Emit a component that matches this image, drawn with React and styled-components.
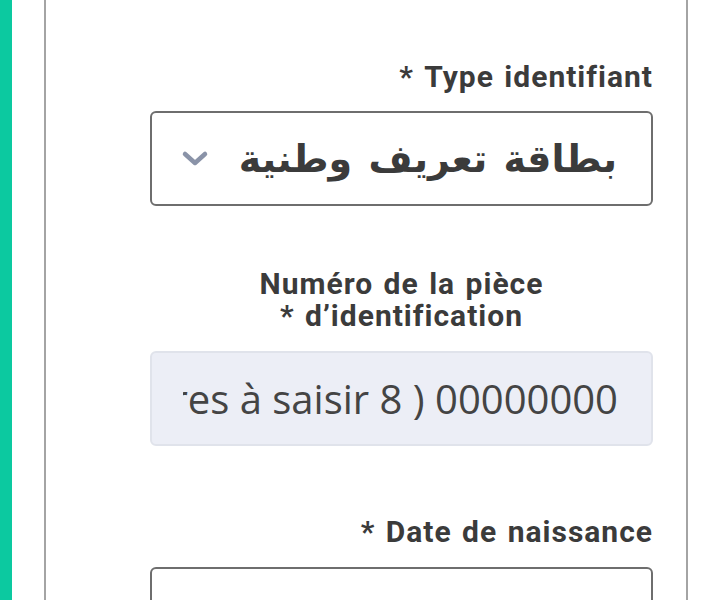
import React from "react";
import styled, { createGlobalStyle } from "styled-components";

const GlobalStyle = createGlobalStyle`
  html, body { margin: 0; padding: 0; background: #ffffff; }
  body { width: 720px; height: 600px; overflow: hidden; }
`;

const Page = styled.div`
  display: flex;
  height: 600px;
  overflow: hidden;
  background: #ffffff;
`;

const Accent = styled.div`
  width: 12px;
  flex: none;
  background: #0cc9a0;
`;

const Card = styled.div`
  margin-left: 32px;
  width: 640px;
  flex: none;
  border-left: 2px solid #a4a4a4;
  border-right: 2px solid #a4a4a4;
  background: #ffffff;
`;

const Form = styled.form`
  direction: rtl;
  display: flex;
  flex-direction: column;
  padding: 61px 33px 0 104px;
`;

const Field = styled.div`
  display: flex;
  flex-direction: column;
  margin-bottom: ${(p) => p.$gap || 0}px;
`;

const Label = styled.label`
  font-family: Roboto, "Liberation Sans", sans-serif;
  font-weight: 700;
  font-size: 30px;
  line-height: 32px;
  letter-spacing: 1px;
  word-spacing: 2px;
  color: #3b3b3b;
  text-align: ${(p) => (p.$center ? "center" : "right")};
  margin-bottom: ${(p) => p.$mb || 18}px;
`;

const SelectBox = styled.div`
  height: 95px;
  box-sizing: border-box;
  border: 2px solid #6e6e6e;
  border-radius: 6px;
  display: flex;
  align-items: center;
  justify-content: space-between;
  padding: 0 34px 0 28px;
  background: #fff;
`;

const SelectText = styled.span`
  font-family: "DejaVu Sans", "Noto Sans", sans-serif;
  font-weight: 700;
  font-size: 38px;
  line-height: 1;
  word-spacing: 3px;
  color: #3b3b3b;
  white-space: nowrap;
`;

const Chevron = styled.svg`
  width: 30px;
  height: 20px;
  flex: none;
`;

const TextInput = styled.input`
  direction: rtl;
  height: 95px;
  box-sizing: border-box;
  width: 100%;
  border: 2px solid #e0e3eb;
  border-radius: 6px;
  background: #eceef6;
  padding: 0 33px 0 31px;
  font-family: "Open Sans", "Noto Sans", sans-serif;
  font-size: 40px;
  color: #3b3b3b;
  outline: none;
  &::placeholder {
    color: #444444;
    opacity: 1;
  }
`;

const DateBox = styled.div`
  height: 95px;
  box-sizing: border-box;
  border: 2px solid #6e6e6e;
  border-radius: 6px;
  background: #fff;
`;

export default function App() {
  return (
    <>
      <GlobalStyle />
      <Page>
        <Accent />
        <Card>
          <Form dir="rtl" onSubmit={(e) => e.preventDefault()}>
            <Field $gap={62}>
              <Label>Type identifiant *</Label>
              <SelectBox>
                <SelectText>بطاقة تعريف وطنية</SelectText>
                <Chevron viewBox="0 0 30 20" aria-hidden="true">
                  <path
                    d="M5 5 L15 14 L25 5"
                    fill="none"
                    stroke="#8a93a8"
                    strokeWidth="4.5"
                    strokeLinecap="round"
                    strokeLinejoin="round"
                  />
                </Chevron>
              </SelectBox>
            </Field>
            <Field $gap={70}>
              <Label $center $mb={19}>
                Numéro de la pièce d’identification *
              </Label>
              <TextInput
                readOnly
                dir="rtl"
                placeholder="Nombre de caractères à saisir 8 ) 00000000"
              />
            </Field>
            <Field>
              <Label $mb={19}>Date de naissance *</Label>
              <DateBox />
            </Field>
          </Form>
        </Card>
      </Page>
    </>
  );
}
